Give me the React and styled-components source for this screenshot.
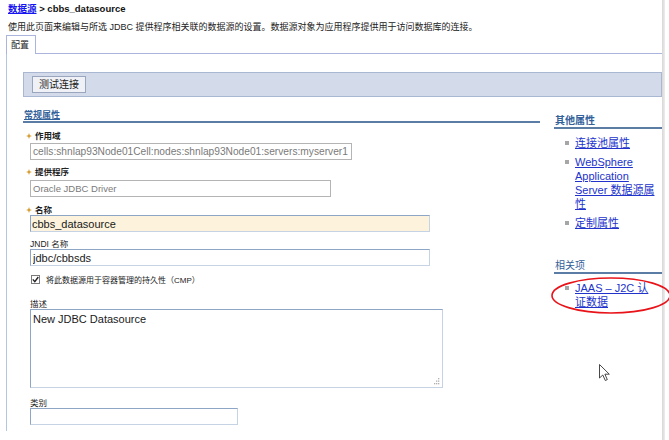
import React from 'react';
import styled, { createGlobalStyle } from 'styled-components';

const FONT = `"Liberation Sans", "Noto Sans CJK SC", sans-serif`;

const Global = createGlobalStyle`
  html, body { margin: 0; padding: 0; background: #fff; }
  body { font-family: ${FONT}; color: #1a1a1a; }
  * { box-sizing: border-box; }
`;

const Root = styled.div`
  position: relative;
  width: 669px;
  height: 440px;
  overflow: hidden;
  display: flex;
  background: #fff;
`;

const Main = styled.div`
  width: 662px;
  flex: none;
  display: flex;
  flex-direction: column;
`;

const Edge = styled.div`
  width: 3px;
  flex: none;
  background: linear-gradient(to right, #d6d6d6, #ededed);
`;

const Breadcrumb = styled.div`
  margin: 3px 0 0 8px;
  font-size: 9.5px;
  font-weight: bold;
  line-height: 12px;
  color: #111;
  white-space: nowrap;
`;

const Crumb = styled.a`
  color: #1414f0;
  text-decoration: underline;
`;

const Desc = styled.div`
  margin: 6px 0 0 8px;
  font-size: 9px;
  line-height: 12px;
  color: #222;
  white-space: nowrap;
`;

const TabBar = styled.div`
  display: flex;
  align-items: flex-end;
  margin: 2px 0 0 6px;
`;

const Tab = styled.div`
  height: 19px;
  padding: 0 6px 0 4px;
  border: 1px solid #aab4dc;
  border-bottom: none;
  font-size: 9px;
  line-height: 18px;
  color: #222;
  background: #fff;
`;

const TabFill = styled.div`
  flex: 1;
  border-bottom: 1px solid #aab4dc;
`;

const Panel = styled.div`
  margin-left: 6px;
  border-left: 1px solid #b3c6e0;
  padding: 18px 0 6px 16px;
`;

const Toolbar = styled.div`
  height: 25px;
  border: 1px solid #a9b7d2;
  background: #d3dbea;
  display: flex;
  align-items: center;
  padding-left: 8px;
`;

const Button = styled.button`
  height: 17px;
  padding: 0 6px;
  font-family: ${FONT};
  font-size: 10px;
  line-height: 15px;
  color: #222;
  background: #eff1f6;
  border: 1px solid #9aa6bd;
  border-radius: 0;
`;

const Columns = styled.div`
  display: grid;
  grid-template-columns: 517px 108px;
  column-gap: 14px;
`;

const LeftCol = styled.div`
  display: flex;
  flex-direction: column;
`;

const RightCol = styled.div`
  display: flex;
  flex-direction: column;
`;

const SectionHead = styled.div`
  margin-top: ${(p) => p.$mt}px;
  font-size: ${(p) => p.$size}px;
  font-weight: ${(p) => (p.$bold ? 'bold' : 'normal')};
  line-height: 12px;
  color: #33619a;
  border-bottom: 2px solid #5b7ca5;
  padding-left: 1px;
  text-decoration: ${(p) => (p.$underline ? 'underline' : 'none')};
`;

const Fields = styled.div`
  padding-left: 7px;
  display: flex;
  flex-direction: column;
`;

const Field = styled.div`
  margin-top: ${(p) => p.$mt}px;
  display: flex;
  flex-direction: column;
  align-items: flex-start;
`;

const Label = styled.div`
  font-size: 8.5px;
  line-height: 10px;
  font-weight: ${(p) => (p.$required ? 'bold' : 'normal')};
  color: #222;
  margin-bottom: ${(p) => p.$mb || 0}px;
  display: flex;
  align-items: center;
  white-space: nowrap;
`;

const Star = styled.svg`
  width: 6px;
  height: 6px;
  margin: 0 3px 0 -4px;
  flex: none;
`;

const Input = styled.input`
  width: ${(p) => p.$w}px;
  height: 17px;
  padding: 0 2px 0 ${(p) => (p.$pl != null ? p.$pl : 2)}px;
  font-family: ${FONT};
  font-size: ${(p) => p.$fs}px;
  color: ${(p) => (p.$disabled ? '#7a7a7a' : '#1a1a1a')};
  background: ${(p) => p.$bg || '#fff'};
  border: 1px solid;
  border-color: ${(p) =>
    p.$disabled ? '#b4b4b4' : '#8ea6c6 #c5d3e4 #c5d3e4 #8ea6c6'};
  outline: none;
  margin: 0;
`;

const CheckRow = styled.label`
  margin-top: 7px;
  height: 12px;
  display: flex;
  align-items: center;
  font-size: 8px;
  color: #222;
  white-space: nowrap;
`;

const CheckBox = styled.span`
  width: 9px;
  height: 9px;
  border: 1px solid #7a7a7a;
  background: #fff;
  margin: 0 6px 0 1px;
  display: flex;
  align-items: center;
  justify-content: center;
  flex: none;
`;

const AreaWrap = styled.div`
  position: relative;
  width: 413px;
  height: 79px;
`;

const Area = styled.textarea`
  width: 100%;
  height: 100%;
  resize: none;
  padding: 3px 2px;
  font-family: ${FONT};
  font-size: 11px;
  line-height: 13px;
  color: #1a1a1a;
  border: 1px solid;
  border-color: #8ea6c6 #c5d3e4 #c5d3e4 #8ea6c6;
  outline: none;
  margin: 0;
  display: block;
`;

const Grip = styled.svg`
  position: absolute;
  right: 3px;
  bottom: 3px;
  width: 7px;
  height: 7px;
`;

const LinkList = styled.ul`
  list-style: none;
  margin: ${(p) => p.$mt}px 0 0 0;
  padding: 0 0 0 11px;
  display: flex;
  flex-direction: column;
  gap: 5px;
`;

const LinkItem = styled.li`
  display: flex;
  align-items: flex-start;
`;

const Bullet = styled.span`
  width: 4px;
  height: 4px;
  background: #a6a6a6;
  margin: 5px 6px 0 0;
  flex: none;
`;

const Link = styled.a`
  width: 84px;
  font-size: 11px;
  line-height: 14px;
  color: #2233cc;
  text-decoration: underline;
`;

const Overlay = styled.svg`
  position: absolute;
  left: 0;
  top: 0;
  width: 669px;
  height: 440px;
  pointer-events: none;
`;

const StarIcon = () => (
  <Star viewBox="0 0 6 6">
    <path d="M3 0 L3.8 2.2 L6 3 L3.8 3.8 L3 6 L2.2 3.8 L0 3 L2.2 2.2 Z" fill="#d49a2c" />
  </Star>
);

export default function App() {
  return (
    <>
      <Global />
      <Root>
        <Main>
          <Breadcrumb>
            <Crumb>数据源</Crumb> &gt; cbbs_datasource
          </Breadcrumb>
          <Desc>
            使用此页面来编辑与所选 JDBC 提供程序相关联的数据源的设置。数据源对象为应用程序提供用于访问数据库的连接。
          </Desc>
          <TabBar>
            <Tab>配置</Tab>
            <TabFill />
          </TabBar>
          <Panel>
            <Toolbar>
              <Button>测试连接</Button>
            </Toolbar>
            <Columns>
              <LeftCol>
                <SectionHead $mt={12} $size={9} $bold $underline>
                  常规属性
                </SectionHead>
                <Fields>
                  <Field $mt={8}>
                    <Label $required $mb={2}>
                      <StarIcon />
                      作用域
                    </Label>
                    <Input
                      readOnly
                      $disabled
                      $w={322}
                      $fs={10.2}
                      defaultValue="cells:shnlap93Node01Cell:nodes:shnlap93Node01:servers:myserver1"
                    />
                  </Field>
                  <Field $mt={7}>
                    <Label $required $mb={3}>
                      <StarIcon />
                      提供程序
                    </Label>
                    <Input readOnly $disabled $w={301} $fs={9.5} defaultValue="Oracle JDBC Driver" />
                  </Field>
                  <Field $mt={8}>
                    <Label $required>
                      <StarIcon />
                      名称
                    </Label>
                    <Input readOnly $w={400} $fs={11} $pl={1} $bg="#fdf3dc" defaultValue="cbbs_datasource" />
                  </Field>
                  <Field $mt={7}>
                    <Label>JNDI 名称</Label>
                    <Input readOnly $w={400} $fs={11} defaultValue="jdbc/cbbsds" />
                  </Field>
                  <CheckRow>
                    <CheckBox>
                      <svg width="7" height="7" viewBox="0 0 7 7">
                        <path d="M0.8 3.4 L2.8 5.6 L6.3 1" fill="none" stroke="#222" strokeWidth="1.4" />
                      </svg>
                    </CheckBox>
                    将此数据源用于容器管理的持久性（CMP）
                  </CheckRow>
                  <Field $mt={14}>
                    <Label>描述</Label>
                    <AreaWrap>
                      <Area readOnly defaultValue="New JDBC Datasource" />
                      <Grip viewBox="0 0 7 7">
                        <g fill="#b0b0b0">
                          <rect x="5" y="0" width="1.3" height="1.3" />
                          <rect x="3" y="2.5" width="1.3" height="1.3" />
                          <rect x="5" y="2.5" width="1.3" height="1.3" />
                          <rect x="1" y="5" width="1.3" height="1.3" />
                          <rect x="3" y="5" width="1.3" height="1.3" />
                          <rect x="5" y="5" width="1.3" height="1.3" />
                        </g>
                      </Grip>
                    </AreaWrap>
                  </Field>
                  <Field $mt={10}>
                    <Label>类别</Label>
                    <Input readOnly $w={208} $fs={11} defaultValue="" />
                  </Field>
                </Fields>
              </LeftCol>
              <RightCol>
                <SectionHead $mt={18} $size={10} $bold>
                  其他属性
                </SectionHead>
                <LinkList $mt={7}>
                  <LinkItem>
                    <Bullet />
                    <Link>连接池属性</Link>
                  </LinkItem>
                  <LinkItem>
                    <Bullet />
                    <Link>WebSphere Application Server 数据源属性</Link>
                  </LinkItem>
                  <LinkItem>
                    <Bullet />
                    <Link>定制属性</Link>
                  </LinkItem>
                </LinkList>
                <SectionHead $mt={30} $size={10}>
                  相关项
                </SectionHead>
                <LinkList $mt={7}>
                  <LinkItem>
                    <Bullet />
                    <Link>JAAS – J2C 认证数据</Link>
                  </LinkItem>
                </LinkList>
              </RightCol>
            </Columns>
          </Panel>
        </Main>
        <Edge />
        <Overlay viewBox="0 0 669 440">
          <ellipse cx="611" cy="295.5" rx="59" ry="17.5" fill="none" stroke="#e8141a" strokeWidth="1.6" />
          <path
            d="M599.5 364.5 L599.5 378 L602.8 375 L605.3 380.5 L607.3 379.6 L604.9 374.2 L609.3 374.2 Z"
            fill="#fff"
            stroke="#333"
            strokeWidth="0.9"
            strokeLinejoin="round"
          />
        </Overlay>
      </Root>
    </>
  );
}
